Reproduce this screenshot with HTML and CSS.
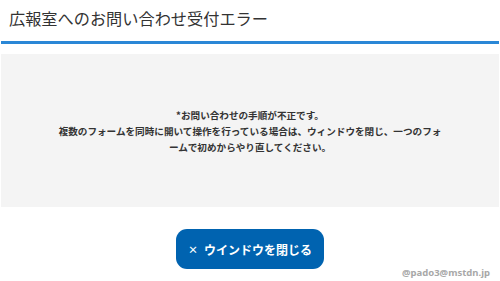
FILE: index.html
```html
<!DOCTYPE html>
<html lang="ja">
<head>
<meta charset="utf-8">
<title>広報室へのお問い合わせ受付エラー</title>
<link rel="stylesheet" href="styles.css">
</head>
<body>
<div class="page">
  <header class="header">
    <h1 class="title">広報室へのお問い合わせ受付エラー</h1>
  </header>
  <section class="notice">
    <p class="message">*お問い合わせの手順が不正です。<br>複数のフォームを同時に開いて操作を行っている場合は、ウィンドウを閉じ、一つのフォ<br>ームで初めからやり直してください。</p>
  </section>
  <div class="actions">
    <button class="close-btn" type="button"><span class="close-x">×</span>ウインドウを閉じる</button>
  </div>
</div>
<div class="watermark">@pado3@mstdn.jp</div>
</body>
</html>
```
FILE: styles.css
```css
html, body {
  margin: 0;
  padding: 0;
  background: #ffffff;
}
body {
  font-family: "Noto Sans CJK JP", "Noto Sans", sans-serif;
  color: #333333;
  width: 500px;
  height: 281px;
  overflow: hidden;
  position: relative;
}
.page {
  padding: 0 1px;
  display: flex;
  flex-direction: column;
}
.header {
  border-bottom: 3px solid #2a87d6;
  padding: 8px 0 13px 8px;
}
.title {
  margin: 0;
  font-size: 16.2px;
  line-height: 20px;
  font-weight: 400;
  color: #333333;
}
.notice {
  margin-top: 10px;
  height: 153px;
  background: #f4f4f4;
  display: flex;
  align-items: center;
  justify-content: center;
}
.message {
  margin: 0;
  font-size: 9.6px;
  line-height: 16px;
  font-weight: 700;
  text-align: center;
  color: #333333;
}
.actions {
  display: flex;
  justify-content: center;
  margin-top: 22px;
}
.close-btn {
  width: 148px;
  height: 40px;
  border: none;
  border-radius: 11px;
  background: #0063b0;
  color: #ffffff;
  font-family: "Noto Sans CJK JP", "Noto Sans", sans-serif;
  font-size: 12px;
  font-weight: 700;
  display: flex;
  align-items: center;
  justify-content: center;
  gap: 6px;
  padding: 0;
}
.close-x {
  font-size: 10px;
  font-weight: 700;
}
.watermark {
  position: absolute;
  right: 10px;
  bottom: 2px;
  font-family: "Noto Sans", "DejaVu Sans", sans-serif;
  font-size: 9.5px;
  font-weight: 700;
  color: #a8a8a8;
}
```
